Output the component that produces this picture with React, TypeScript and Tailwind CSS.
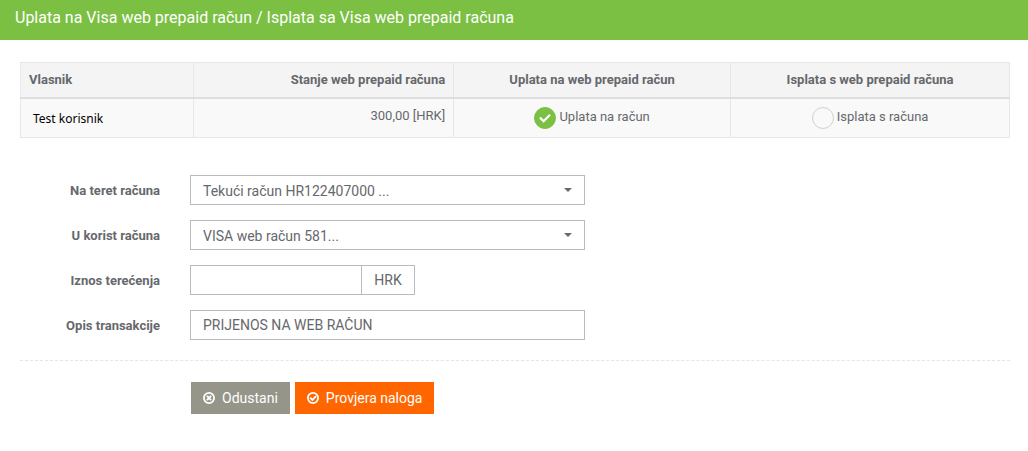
import { useState, type ReactNode } from "react";

const FIELD =
  "h-[30px] w-full appearance-none rounded-none border border-[#b9bbc0] bg-white px-3 text-sm leading-5 text-[#66686c] outline-none focus:border-[#7bc043]";

function CancelIcon() {
  return (
    <svg viewBox="0 0 24 24" className="size-3 shrink-0" fill="none" stroke="currentColor" aria-hidden="true">
      <circle cx="12" cy="12" r="10.2" strokeWidth="3.6" />
      <path d="M7.8 7.8l8.4 8.4M16.2 7.8l-8.4 8.4" strokeWidth="4" />
    </svg>
  );
}

function ConfirmIcon() {
  return (
    <svg viewBox="0 0 24 24" className="size-3 shrink-0" fill="none" stroke="currentColor" aria-hidden="true">
      <circle cx="12" cy="12" r="10.2" strokeWidth="3.6" />
      <path d="M6.2 11.2l4.6 4.6 7.4-7.4" strokeWidth="3.8" />
    </svg>
  );
}

type ChoiceProps = { label: string; checked: boolean; onSelect: () => void };

function Choice({ label, checked, onSelect }: ChoiceProps) {
  return (
    <label className="inline-flex cursor-pointer items-start gap-[3px]">
      <span className="grid">
        <input
          type="radio"
          name="smjer"
          checked={checked}
          onChange={onSelect}
          className="peer col-start-1 row-start-1 size-[22px] appearance-none rounded-full border border-[#d3d1cc] bg-transparent checked:border-[#7bc043] checked:bg-[#7bc043]"
        />
        <svg
          viewBox="0 0 12 10"
          className="pointer-events-none invisible col-start-1 row-start-1 h-[10px] w-3 place-self-center peer-checked:visible"
          fill="none"
          stroke="white"
          strokeWidth="2.2"
          aria-hidden="true"
        >
          <path d="M1 4.6L4.6 8.2L11 1.8" />
        </svg>
      </span>
      <span className="leading-5">{label}</span>
    </label>
  );
}

function Row({ id, label, children }: { id: string; label: string; children: ReactNode }) {
  return (
    <div className="flex items-center gap-[30px]">
      <label htmlFor={id} className="w-[140px] shrink-0 pt-0.5 text-right text-[13px] font-bold leading-5">
        {label}
      </label>
      <div className="min-w-0 max-w-[395px] flex-1">{children}</div>
    </div>
  );
}

function Dropdown({ id, text }: { id: string; text: string }) {
  return (
    <div className="grid items-center">
      <select id={id} className={`${FIELD} col-start-1 row-start-1 pt-0.5`}>
        <option>{text}</option>
      </select>
      <svg
        viewBox="0 0 8 4"
        className="pointer-events-none col-start-1 row-start-1 mr-[13px] h-1 w-2 justify-self-end"
        fill="#66686c"
        aria-hidden="true"
      >
        <path d="M0 0h8L4 4z" />
      </svg>
    </div>
  );
}

export default function App() {
  const [direction, setDirection] = useState("uplata");
  return (
    <div className="bg-white pb-9 font-['Roboto',sans-serif] text-[13px] text-[#66686c]">
      <header className="bg-[#7bc043] px-[15px] pb-3 pt-2 text-white">
        <h1 className="text-base leading-5">
          Uplata na Visa web prepaid račun / Isplata sa Visa web prepaid računa
        </h1>
      </header>

      <main className="pl-5 pr-[18px] pt-[22px]">
        <table className="w-full table-fixed border-collapse border border-[#e7e7e7] leading-5">
          <colgroup>
            <col className="w-[17.5%]" />
            <col className="w-[26.3%]" />
            <col className="w-[28%]" />
            <col />
          </colgroup>
          <thead>
            <tr className="border-b-2 border-[#dedede] bg-[#f4f4f4]">
              <th className="border-r border-[#e7e7e7] px-2 pb-[7px] pt-[7px] text-left font-bold">Vlasnik</th>
              <th className="border-r border-[#e7e7e7] px-2 text-right font-bold">Stanje web prepaid računa</th>
              <th className="border-r border-[#e7e7e7] px-2 text-center font-bold">Uplata na web prepaid račun</th>
              <th className="px-2 text-center font-bold">Isplata s web prepaid računa</th>
            </tr>
          </thead>
          <tbody>
            <tr className="bg-[#f9f9f9] align-top">
              <td className="border-r border-[#e7e7e7] px-3 pb-2 pt-[10px] font-['Noto_Sans',sans-serif] text-xs leading-5 text-black">
                Test korisnik
              </td>
              <td className="border-r border-[#e7e7e7] px-2 pt-[7px] text-right">300,00 [HRK]</td>
              <td className="border-r border-[#e7e7e7] px-2 pt-2 text-center">
                <Choice
                  label="Uplata na račun"
                  checked={direction === "uplata"}
                  onSelect={() => setDirection("uplata")}
                />
              </td>
              <td className="px-2 pt-2 text-center">
                <Choice
                  label="Isplata s računa"
                  checked={direction === "isplata"}
                  onSelect={() => setDirection("isplata")}
                />
              </td>
            </tr>
          </tbody>
        </table>

        <form className="pt-[37px]" onSubmit={(event) => event.preventDefault()}>
          <div className="flex flex-col gap-[15px]">
            <Row id="teret" label="Na teret računa">
              <Dropdown id="teret" text="Tekući račun HR122407000 ..." />
            </Row>
            <Row id="korist" label="U korist računa">
              <Dropdown id="korist" text="VISA web račun 581..." />
            </Row>
            <Row id="iznos" label="Iznos terećenja">
              <div className="flex max-w-[225px]">
                <input id="iznos" type="text" className={`${FIELD} min-w-0 flex-1`} />
                <span className="w-[53px] border border-l-0 border-[#b9bbc0] text-center text-sm leading-7">HRK</span>
              </div>
            </Row>
            <Row id="opis" label="Opis transakcije">
              <input id="opis" type="text" defaultValue="PRIJENOS NA WEB RAČUN" className={FIELD} />
            </Row>
          </div>

          <div className="mt-5 flex gap-[5px] border-t border-dashed border-[#e5e5e5] pl-[171px] pt-[21px]">
            <button type="button" className="flex h-8 items-center gap-[7px] bg-[#95958a] px-3 text-sm text-white">
              <CancelIcon />
              Odustani
            </button>
            <button type="submit" className="flex h-8 items-center gap-[7px] bg-[#ff6600] px-3 text-sm text-white">
              <ConfirmIcon />
              Provjera naloga
            </button>
          </div>
        </form>
      </main>
    </div>
  );
}
